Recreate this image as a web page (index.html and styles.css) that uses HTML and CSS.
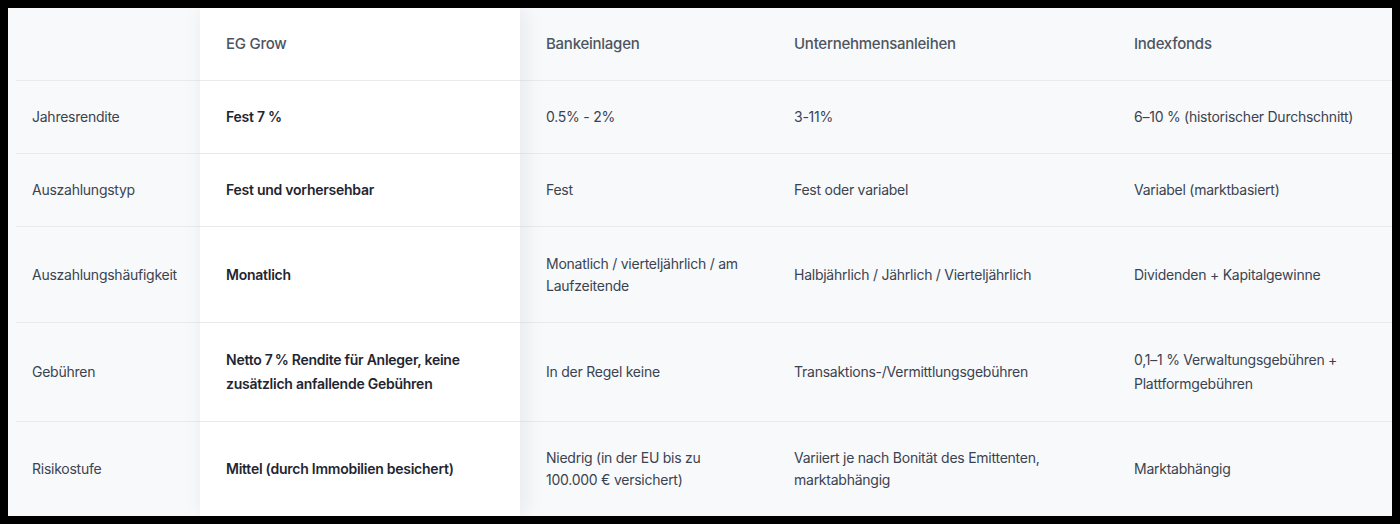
FILE: index.html
```html
<!DOCTYPE html>
<html lang="de">
<head>
<meta charset="utf-8">
<title>Vergleich</title>
<link rel="stylesheet" href="styles.css">
</head>
<body>
<div class="table">
  <div class="featured-bg"></div>

  <div class="row r1">
    <div class="cell label head"></div>
    <div class="cell feat head">EG Grow</div>
    <div class="cell head">Bankeinlagen</div>
    <div class="cell head">Unternehmensanleihen</div>
    <div class="cell head">Indexfonds</div>
  </div>

  <div class="row r2">
    <div class="cell label">Jahresrendite</div>
    <div class="cell feat">Fest 7 %</div>
    <div class="cell">0.5% - 2%</div>
    <div class="cell">3-11%</div>
    <div class="cell">6–10 % (historischer Durchschnitt)</div>
  </div>

  <div class="row r3">
    <div class="cell label">Auszahlungstyp</div>
    <div class="cell feat">Fest und vorhersehbar</div>
    <div class="cell">Fest</div>
    <div class="cell">Fest oder variabel</div>
    <div class="cell">Variabel (marktbasiert)</div>
  </div>

  <div class="row r4">
    <div class="cell label">Auszahlungshäufigkeit</div>
    <div class="cell feat">Monatlich</div>
    <div class="cell">Monatlich / vierteljährlich / am Laufzeitende</div>
    <div class="cell">Halbjährlich / Jährlich / Vierteljährlich</div>
    <div class="cell">Dividenden + Kapitalgewinne</div>
  </div>

  <div class="row r5 tall">
    <div class="cell label">Gebühren</div>
    <div class="cell feat">Netto 7&#8239;% Rendite für Anleger, keine zusätzlich anfallende Gebühren</div>
    <div class="cell">In der Regel keine</div>
    <div class="cell">Transaktions-/Vermittlungsgebühren</div>
    <div class="cell">0,1–1 % Verwaltungsgebühren + Plattformgebühren</div>
  </div>

  <div class="row r6 last">
    <div class="cell label">Risikostufe</div>
    <div class="cell feat">Mittel (durch Immobilien besichert)</div>
    <div class="cell">Niedrig (in der EU bis zu 100.000 € versichert)</div>
    <div class="cell">Variiert je nach Bonität des Emittenten, marktabhängig</div>
    <div class="cell">Marktabhängig</div>
  </div>
</div>
</body>
</html>
```

FILE: styles.css
```css
html {
  background: #000;
}

body {
  margin: 8px;
  font-family: Inter, "Noto Sans", "Liberation Sans", sans-serif;
  font-size: 14px;
  letter-spacing: -0.25px;
  color: #3b4350;
}

.table {
  display: grid;
  grid-template-columns: 192px 320px 248px 340px 284px;
  height: 508px;
  overflow: hidden;
  background: #f8f9fb;
}

.featured-bg {
  grid-column: 2;
  grid-row: 1 / span 6;
  background: #ffffff;
  box-shadow: 4px 0 20px rgba(20, 30, 50, 0.08);
  z-index: 1;
}

.row {
  display: contents;
}

.r1 > .cell { grid-row: 1; }
.r2 > .cell { grid-row: 2; }
.r3 > .cell { grid-row: 3; }
.r4 > .cell { grid-row: 4; }
.r5 > .cell { grid-row: 5; }
.r6 > .cell { grid-row: 6; }

.cell {
  display: flex;
  align-items: center;
  padding: 25px 24px 25px 26px;
  line-height: 22px;
  border-bottom: 1px solid #e8eaee;
}

.cell.label {
  grid-column: 1;
  margin-left: 8px;
  padding-left: 16px;
  padding-right: 8px;
}

.cell.feat {
  grid-column: 2;
  z-index: 2;
  font-weight: 600;
  color: #1f2631;
}

.cell.head {
  font-size: 15px;
  font-weight: 500;
  color: #4d5561;
}

.cell.feat.head {
  font-weight: 500;
  color: #4d5561;
}

.tall > .cell {
  line-height: 24px;
}

.last > .cell {
  border-bottom: none;
}
```
